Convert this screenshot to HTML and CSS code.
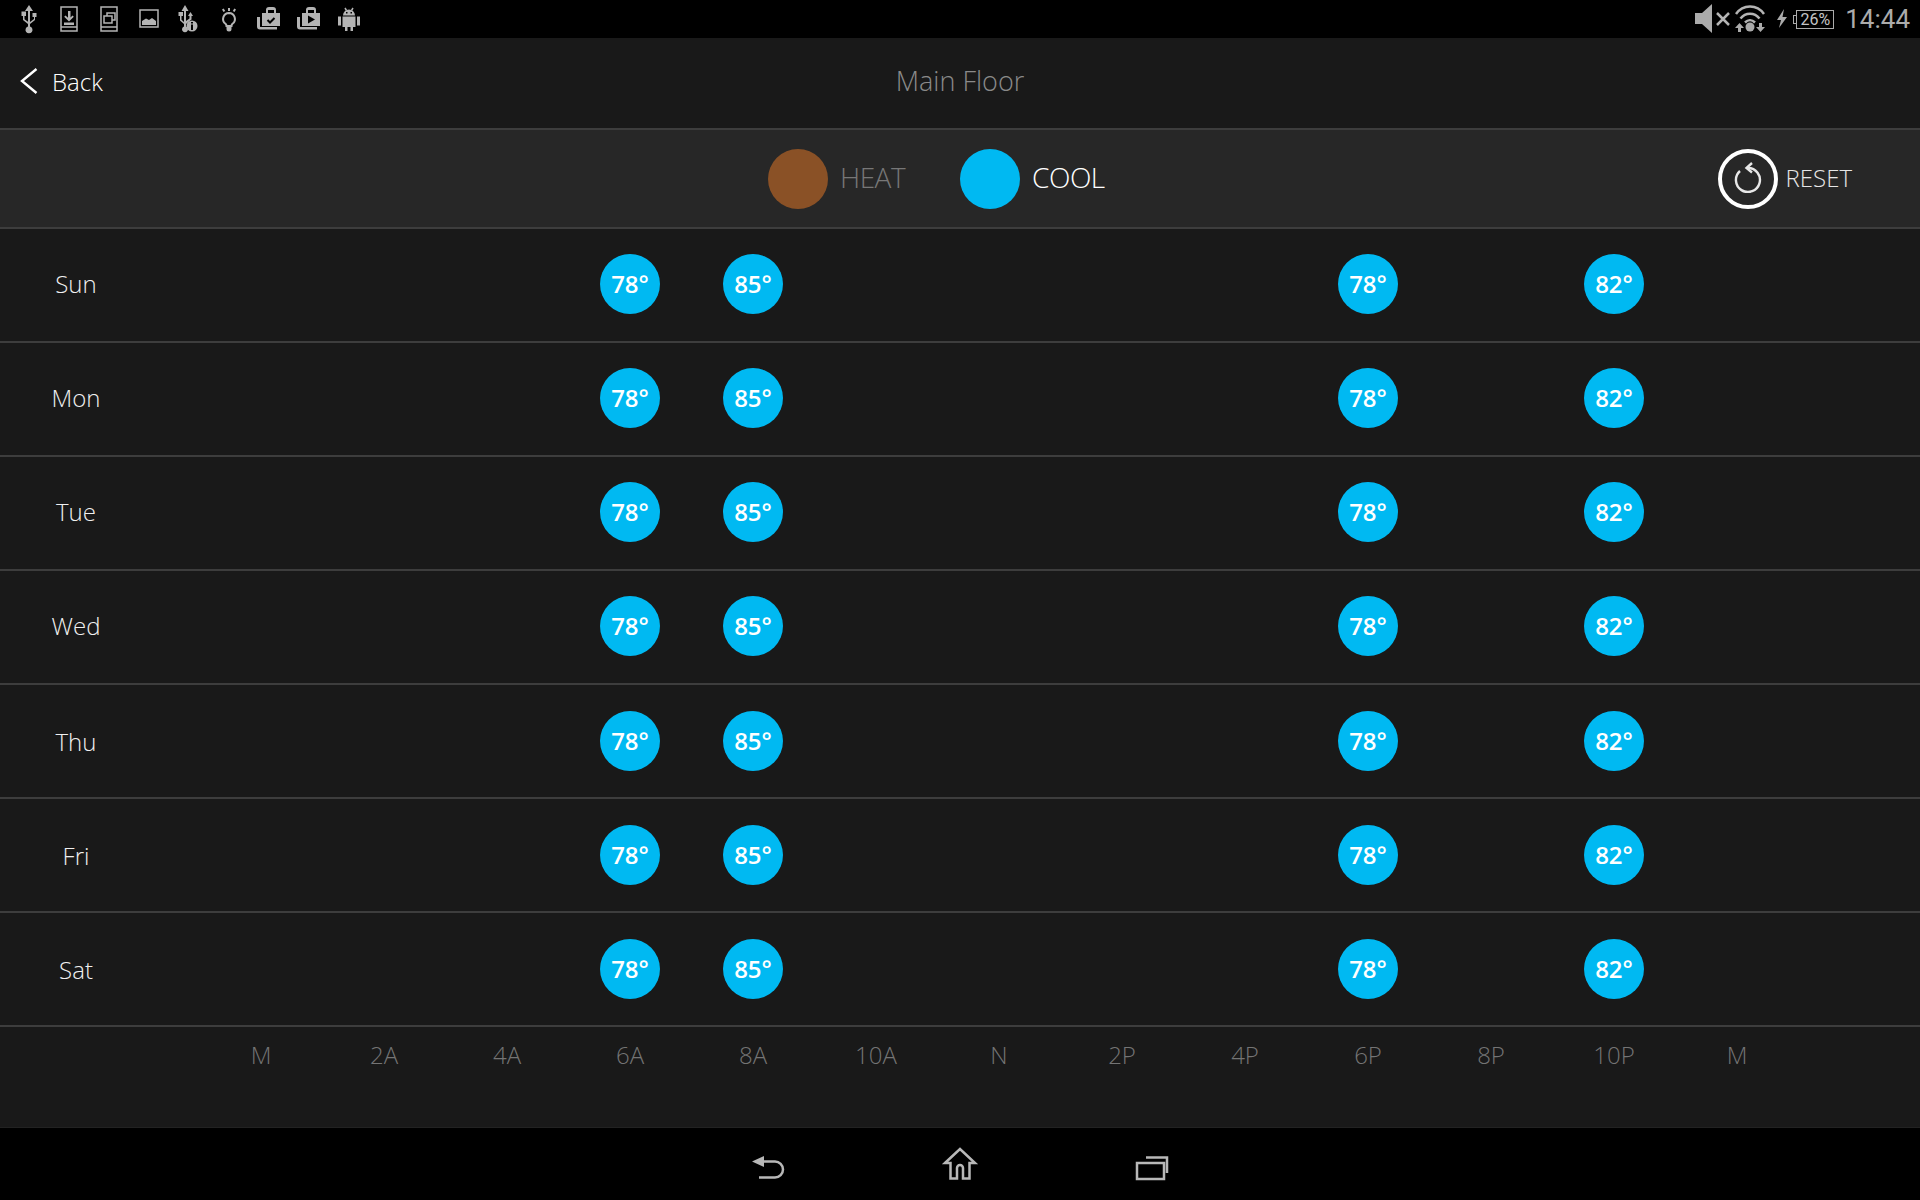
FILE: index.html
```html
<!DOCTYPE html>
<html lang="en">
<head>
  <meta charset="UTF-8">
  <meta name="viewport" content="width=device-width, initial-scale=1.0">
  <title>Main Floor</title>
  <link rel="stylesheet" href="styles.css">
</head>
<body>

  <div class="status-bar">
    <div class="status-left">
      <svg class="status-icon" viewBox="0 0 24 38"><path d="M12 5l4 6h-3v15.500a3.500 3.500 0 1 1-2 0V24l-5-4v-4H4.500v-4.500h4.500V16H7.500v3.200l3.500 2.600V11H8z"/><path d="M13 22l4-3v-2h-1.500v-4h4v4H18v3l-5 4z"/></svg>
      <svg class="status-icon" viewBox="0 0 24 38"><path class="line" d="M4 7h16v24H4zM4 27h16"/><path d="M11 11h2.500v6.500l2-2 1.300 1.300L12 21.500l-4.800-4.700L8.500 15.500l2.500 2.300zM7 22.500h10V25H7z"/></svg>
      <svg class="status-icon" viewBox="0 0 24 38"><path class="line" d="M4 7h16v24H4zM4 27h16M7 16h8v7H7zM10 16v-3h8v7h-3"/></svg>
      <svg class="status-icon" viewBox="0 0 24 38"><path class="line" d="M3 10h18v17H3z"/><path d="M5 25v-4l4-2.500 3 1.500 3-2 4 3v4z"/></svg>
      <svg class="status-icon" viewBox="0 0 24 38"><path d="M8 5l3.500 6H9v15.500a3 3 0 1 1-2 0V24l-4-3.500V16H1.500v-4h4.500v4H4.500v3.800L7 22V11H4.500z"/><path d="M9 21l3.500-2.500V16H11l2.500-4 2.500 4h-1.500v3.500L9 24z"/><circle cx="15" cy="26" r="5.500"/><path class="cut" d="M14 24.500h2V30h-2zM14 22h2v1.500h-2z"/></svg>
      <svg class="status-icon" viewBox="0 0 24 38"><path class="line mid" d="M12 13a6 6 0 0 0-3.500 10.800c.8.700 1 1.200 1 2.200h5c0-1 .2-1.500 1-2.200A6 6 0 0 0 12 13z"/><path d="M9.500 26.500h5V29a2.500 2.500 0 0 1-5 0zM11 8h2v3h-2zM5 9.500l1.700-1 1.500 2.600-1.700 1zM19 9.500l-1.700-1-1.500 2.600 1.700 1z"/></svg>
      <svg class="status-icon" viewBox="0 0 24 38"><path d="M5 13h4v-3a3 3 0 0 1 3-3h4a3 3 0 0 1 3 3v3h4v13H5zM11 13h6v-3h-6z"/><path d="M0 17h3v9.500a.5.500 0 0 0 .5.500H20v2.500H3a3 3 0 0 1-3-3z"/><path class="cut-line" d="M10.500 20l2.500 2.500 4.500-4.500"/></svg>
      <svg class="status-icon" viewBox="0 0 24 38"><path d="M5 13h4v-3a3 3 0 0 1 3-3h4a3 3 0 0 1 3 3v3h4v13H5zM11 13h6v-3h-6z"/><path d="M0 17h3v9.500a.5.500 0 0 0 .5.500H20v2.500H3a3 3 0 0 1-3-3z"/><path class="cut" d="M11 15.500l7 4-7 4z"/></svg>
      <svg class="status-icon" viewBox="0 0 24 38"><path d="M6 15.500a6 6 0 0 1 12 0zM5.500 16.500h13v10.500h-2.500v4h-2.500v-4h-3v4H8v-4H5.500zM1 16.500h3v9H1zM20 16.500h3v9h-3z"/><path class="line" d="M8 8l1.500 2.500M16 8l-1.500 2.500"/><path class="cut" d="M9 12h1.500v1.500H9zM13.500 12H15v1.500h-1.500z"/></svg>
    </div>
    <div class="status-right">
      <svg class="tray-sound" viewBox="0 0 36 38"><path d="M1 13h7l10-9v29L8 24H1z"/><path class="line thick" d="M23 13l12 12M35 13L23 25"/></svg>
      <svg class="tray-wifi" viewBox="0 0 32 38"><path class="line thick" d="M2 14C9 4 23 4 30 14M6.500 18.500c5-6.500 14-6.500 19 0M11 22.500c3-3 7-3 10 0"/><circle cx="16" cy="27" r="4.500"/><path d="M5.500 23l4.500 5H7v4H4v-4H1zM26.500 32L22 27h3v-4h3v4h3z"/></svg>
      <svg class="tray-bolt" viewBox="0 0 12 20"><path d="M8 0L1 11h4l-2 8 8-11H6.500z"/></svg>
      <div class="battery">26%</div>
      <div class="clock">14:44</div>
    </div>
  </div>

  <div class="app-header">
    <div class="back">
      <svg class="back-arrow" viewBox="0 0 18 26"><path d="M16.500 1L2 13l14.500 12"/></svg>
      <span>Back</span>
    </div>
    <div class="page-title">Main Floor</div>
  </div>

  <div class="mode-bar">
    <div class="mode off"><span class="mode-dot heat"></span><span class="mode-label">HEAT</span></div>
    <div class="mode"><span class="mode-dot cool"></span><span class="mode-label">COOL</span></div>
    <div class="reset">
      <span class="reset-ring">
        <svg viewBox="0 0 28 31"><path d="M14 6A12 12 0 1 1 6 9"/><path d="M18 1l-5.500 5 5.500 4.500"/></svg>
      </span>
      <span class="mode-label">RESET</span>
    </div>
  </div>

  <div class="schedule">
    <div class="day-row">
      <div class="day">Sun</div>
      <div class="temp at-6a">78°</div><div class="temp at-8a">85°</div><div class="temp at-6p">78°</div><div class="temp at-10p">82°</div>
    </div>
    <div class="day-row">
      <div class="day">Mon</div>
      <div class="temp at-6a">78°</div><div class="temp at-8a">85°</div><div class="temp at-6p">78°</div><div class="temp at-10p">82°</div>
    </div>
    <div class="day-row">
      <div class="day">Tue</div>
      <div class="temp at-6a">78°</div><div class="temp at-8a">85°</div><div class="temp at-6p">78°</div><div class="temp at-10p">82°</div>
    </div>
    <div class="day-row">
      <div class="day">Wed</div>
      <div class="temp at-6a">78°</div><div class="temp at-8a">85°</div><div class="temp at-6p">78°</div><div class="temp at-10p">82°</div>
    </div>
    <div class="day-row">
      <div class="day">Thu</div>
      <div class="temp at-6a">78°</div><div class="temp at-8a">85°</div><div class="temp at-6p">78°</div><div class="temp at-10p">82°</div>
    </div>
    <div class="day-row">
      <div class="day">Fri</div>
      <div class="temp at-6a">78°</div><div class="temp at-8a">85°</div><div class="temp at-6p">78°</div><div class="temp at-10p">82°</div>
    </div>
    <div class="day-row">
      <div class="day">Sat</div>
      <div class="temp at-6a">78°</div><div class="temp at-8a">85°</div><div class="temp at-6p">78°</div><div class="temp at-10p">82°</div>
    </div>
  </div>

  <div class="hours">
    <span></span>
    <span>M</span><span>2A</span><span>4A</span><span>6A</span><span>8A</span><span>10A</span><span>N</span><span>2P</span><span>4P</span><span>6P</span><span>8P</span><span>10P</span><span>M</span>
  </div>

  <div class="nav-bar">
    <svg class="nav-back" viewBox="0 0 32 24"><path class="fill" d="M0 5.500L12 0v11z"/><path d="M10 5.500h13a7.500 7.500 0 0 1 0 16H7"/></svg>
    <svg class="nav-home" viewBox="0 0 32 32"><path d="M1 15L16 1l15 14h-5.500v15.500H19V20a3 3 0 0 0-6 0v10.500H6.500V15z"/></svg>
    <svg class="nav-recent" viewBox="0 0 32 24"><path d="M1 7h27v16H1zM10 1.500h21V17"/></svg>
  </div>

</body>
</html>
```
FILE: styles.css
```css
body {
  font-family: "Open Sans", "Liberation Sans", sans-serif;
  background-color: #191919;
  margin: 0;
  padding: 0;
  height: 1200px;
  overflow: hidden;
}

/* android status bar */
.status-bar {
  height: 38px;
  background-color: #000;
  display: flex;
  justify-content: space-between;
}

.status-left {
  display: flex;
  gap: 16px;
  padding-left: 17px;
}

.status-icon {
  width: 24px;
  height: 38px;
  fill: #b4b4b4;
}

.line {
  fill: none;
  stroke: #b4b4b4;
  stroke-width: 1.5;
}

.line.mid {
  stroke-width: 2;
}

.line.thick {
  stroke-width: 2.5;
}

.cut {
  fill: #000;
}

.cut-line {
  fill: none;
  stroke: #000;
  stroke-width: 2;
}

.status-right {
  display: flex;
  align-items: center;
  padding-right: 10px;
  fill: #ababab;
}

.tray-sound {
  width: 36px;
  height: 38px;
}

.tray-wifi {
  width: 32px;
  height: 38px;
  margin-left: 4px;
}

.tray-bolt {
  width: 12px;
  height: 20px;
  margin-left: 10px;
}

.battery {
  position: relative;
  width: 38px;
  height: 19px;
  margin-left: 8px;
  box-sizing: border-box;
  border: 1px solid #ababab;
  font-family: Roboto, sans-serif;
  font-size: 16px;
  line-height: 17px;
  text-align: center;
  color: #c4c4c4;
}

.battery::before {
  content: "";
  position: absolute;
  left: -4px;
  top: 4px;
  width: 3px;
  height: 9px;
  border: 1px solid #ababab;
  border-right: none;
  box-sizing: border-box;
}

.clock {
  margin-left: 11px;
  font-family: Roboto, sans-serif;
  font-size: 26px;
  line-height: 38px;
  color: #ababab;
}

/* header */
.app-header {
  position: relative;
  height: 90px;
  display: flex;
  align-items: center;
  justify-content: center;
  border-bottom: 2px solid #3d3d3d;
}

.back {
  position: absolute;
  left: 20px;
  top: 0;
  height: 86px;
  display: flex;
  align-items: center;
  gap: 14px;
  color: #fff;
  font-size: 24px;
  font-weight: 300;
}

.back-arrow {
  width: 18px;
  height: 26px;
  fill: none;
  stroke: #fff;
  stroke-width: 2.4;
}

.page-title {
  padding-bottom: 5px;
  color: #8a8a8a;
  font-size: 27px;
  font-weight: 300;
}

/* heat / cool bar */
.mode-bar {
  height: 97px;
  padding: 0 68px 0 768px;
  display: flex;
  align-items: center;
  background-color: #272727;
  border-bottom: 2px solid #3d3d3d;
}

.mode {
  display: flex;
  align-items: center;
  gap: 12px;
  margin-right: 55px;
  color: #fff;
  font-size: 28px;
  font-weight: 300;
  letter-spacing: -0.5px;
}

.mode.off {
  color: #777;
}

.mode-label {
  margin-bottom: 3px;
}

.mode-dot {
  width: 60px;
  height: 60px;
  border-radius: 50%;
}

.mode-dot.heat {
  background-color: #8a5126;
}

.mode-dot.cool {
  background-color: #00b9f2;
}

.reset {
  margin-left: auto;
  display: flex;
  align-items: center;
  gap: 8px;
  color: #e6e6e6;
  font-size: 24px;
  font-weight: 300;
}

.reset-ring {
  width: 60px;
  height: 60px;
  box-sizing: border-box;
  border: 4px solid #fff;
  border-radius: 50%;
  display: flex;
  align-items: center;
  justify-content: center;
}

.reset-ring svg {
  width: 28px;
  height: 31px;
  margin-bottom: 3px;
  fill: none;
  stroke: #e8e8e8;
  stroke-width: 2.4;
}

/* week grid */
.day-row {
  height: 112px;
  display: grid;
  grid-template-columns: 199.5px repeat(13, 123px);
  align-items: center;
  justify-items: center;
  border-bottom: 2px solid #3d3d3d;
}

/* first rows sit a little higher in the screenshot */
.day-row:nth-child(-n+4) {
  height: 110px;
  padding-bottom: 2px;
}

.day-row:nth-child(-n+4) .day {
  margin-bottom: 2px;
}

.day {
  width: 152px;
  justify-self: start;
  text-align: center;
  color: #f0f0f0;
  font-size: 24px;
  font-weight: 300;
  grid-column: 1;
  grid-row: 1;
}

.temp {
  width: 60px;
  height: 60px;
  border-radius: 50%;
  background-color: #00b9f2;
  color: #fff;
  font-size: 24px;
  font-weight: 600;
  line-height: 60px;
  text-align: center;
  grid-row: 1;
}

.at-6a { grid-column: 5; }
.at-8a { grid-column: 6; }
.at-6p { grid-column: 11; }
.at-10p { grid-column: 13; }

/* hour labels */
.hours {
  height: 101px;
  display: grid;
  grid-template-columns: 199.5px repeat(13, 123px);
  justify-items: center;
  padding-top: 11px;
  box-sizing: border-box;
  color: #747474;
  font-size: 24px;
  font-weight: 300;
  border-bottom: 1px solid #222;
}

/* android nav bar */
.nav-bar {
  height: 72px;
  box-sizing: border-box;
  padding-bottom: 20px;
  background-color: #000;
  display: flex;
  justify-content: center;
  align-items: flex-end;
  gap: 160px;
}

.nav-bar svg {
  fill: none;
  stroke: #b8b8b8;
  stroke-width: 2.5;
  overflow: visible;
}

.nav-back {
  width: 32px;
  height: 24px;
}

.nav-back .fill {
  fill: #b8b8b8;
  stroke: none;
}

.nav-home {
  width: 32px;
  height: 32px;
}

.nav-recent {
  width: 32px;
  height: 24px;
}
```
